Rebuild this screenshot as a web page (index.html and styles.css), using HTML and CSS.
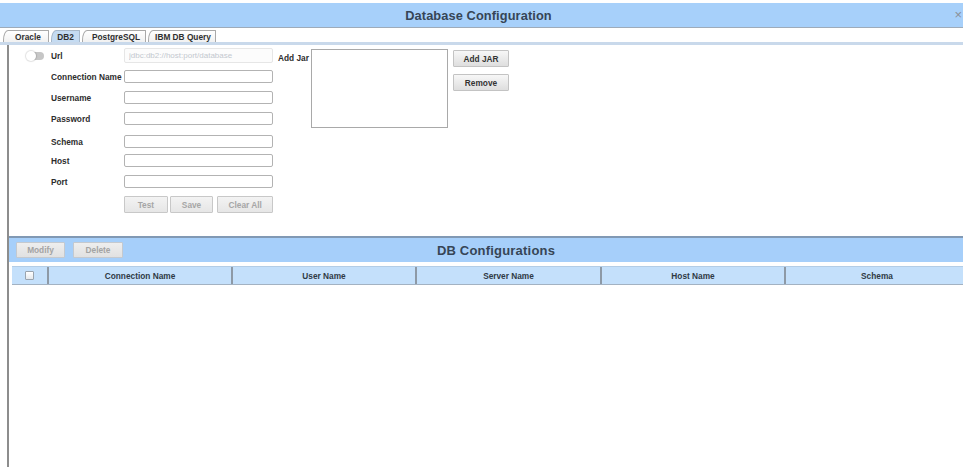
FILE: index.html
```html
<!DOCTYPE html>
<html lang="en">
<head>
<meta charset="utf-8">
<title>Database Configuration</title>
<link rel="stylesheet" href="styles.css">
</head>
<body>
<header class="titlebar">
  <h1 class="title">Database Configuration</h1>
  <span class="close">&times;</span>
</header>

<nav class="tabs">
  <span class="tab tab-oracle">Oracle</span>
  <span class="tab tab-db2 active">DB2</span>
  <span class="tab tab-pg">PostgreSQL</span>
  <span class="tab tab-ibm">IBM DB Query</span>
</nav>
<div class="tab-rule"></div>

<main class="main">
  <section class="form-panel">
    <div class="fields">
      <span class="toggle"><span class="knob"></span></span>
      <label class="label">Url</label>
      <input class="input input-url" type="text" placeholder="jdbc:db2://host:port/database" disabled>

      <span></span>
      <label class="label">Connection Name</label>
      <input class="input" type="text">

      <span></span>
      <label class="label">Username</label>
      <input class="input" type="text">

      <span></span>
      <label class="label">Password</label>
      <input class="input" type="password">

      <span class="row-gap"></span>
      <label class="label row-gap">Schema</label>
      <input class="input row-gap" type="text">

      <span></span>
      <label class="label">Host</label>
      <input class="input" type="text">

      <span></span>
      <label class="label">Port</label>
      <input class="input" type="text">

      <div class="actions">
        <button class="btn btn-disabled btn-test" disabled>Test</button>
        <button class="btn btn-disabled btn-save" disabled>Save</button>
        <button class="btn btn-disabled btn-clear" disabled>Clear All</button>
      </div>
    </div>

    <div class="jar">
      <label class="label jar-label">Add Jar</label>
      <div class="jar-list"></div>
      <div class="jar-buttons">
        <button class="btn btn-jar">Add JAR</button>
        <button class="btn btn-jar">Remove</button>
      </div>
    </div>
  </section>

  <section class="list-panel">
    <div class="band">
      <div class="band-buttons">
        <button class="btn btn-disabled btn-modify" disabled>Modify</button>
        <button class="btn btn-disabled btn-delete" disabled>Delete</button>
      </div>
      <h2 class="band-title">DB Configurations</h2>
    </div>

    <div class="grid-head">
      <div class="cell cell-check"><span class="checkbox"></span></div>
      <div class="cell">Connection Name</div>
      <div class="cell">User Name</div>
      <div class="cell">Server Name</div>
      <div class="cell">Host Name</div>
      <div class="cell">Schema</div>
    </div>
  </section>
</main>
</body>
</html>
```

FILE: styles.css
```css
* { box-sizing: border-box; }

html, body {
  margin: 0;
  height: 100%;
  overflow: hidden;
  background: #ffffff;
  font-family: "Liberation Sans", Arial, sans-serif;
  color: #2e2e2e;
}

/* ---- window title ---- */
.titlebar {
  position: relative;
  margin-top: 3px;
  height: 25px;
  background: #a7d0fa;
  border-bottom: 1px solid #9eabb9;
  display: flex;
  align-items: center;
  justify-content: center;
  padding-right: 6px;
}

.title {
  margin: 0;
  font-size: 12.8px;
  font-weight: bold;
  color: #364556;
  letter-spacing: 0.1px;
}

.close {
  position: absolute;
  right: 1px;
  top: 5px;
  font-size: 13px;
  line-height: 14px;
  color: #8a8f96;
}

/* ---- tabs ---- */
.tabs {
  display: flex;
  gap: 2px;
  margin-top: 2px;
  height: 12px;
  padding-left: 3px;
}

.tab {
  display: flex;
  align-items: center;
  justify-content: center;
  height: 12px;
  font-size: 8.3px;
  font-weight: bold;
  color: #2f2f2f;
  background: linear-gradient(#ffffff, #f1f1f1);
  border: 1px solid #a9a9a9;
  border-bottom: none;
  border-top-left-radius: 5px 10px;
  border-top-right-radius: 1px;
}

.tab-oracle { width: 46px; padding-left: 4px; }
.tab-db2 { width: 29px; }
.tab-pg { width: 64px; padding-left: 4px; }
.tab-ibm { width: 68px; padding-left: 2px; }

.tab.active {
  background: #c4dbf2;
  border-color: #a6b7c9;
}

.tab-rule {
  height: 3px;
  background: #c9d9eb;
}

/* ---- content ---- */
.main {
  margin-left: 7px;
  border-left: 2px solid #8d8d8d;
  height: calc(100% - 45px);
}

.form-panel {
  display: flex;
  height: 191px;
  padding: 4px 0 0 17px;
}

.fields {
  display: grid;
  grid-template-columns: 25px 73px 149px;
  grid-auto-rows: 13px;
  row-gap: 8px;
  align-items: center;
  align-content: start;
}

.fields .row-gap { margin-top: 4px; }

.label {
  font-size: 8.3px;
  font-weight: bold;
  color: #2d2d2d;
  white-space: nowrap;
}

.toggle {
  position: relative;
  width: 17px;
  height: 8px;
  border-radius: 4px;
  background: #c6c6c6;
  margin-left: 1px;
}

.knob {
  position: absolute;
  left: -1px;
  top: -1px;
  width: 10px;
  height: 10px;
  border-radius: 50%;
  background: #ffffff;
  box-shadow: 0 0 1px 1px rgba(0, 0, 0, 0.12);
}

.input {
  width: 149px;
  height: 13px;
  margin: 0;
  padding: 0 4px;
  border: 1px solid #b3b3b3;
  border-radius: 2px;
  background: #ffffff;
  font-family: inherit;
  font-size: 8px;
}

.input-url {
  height: 15px;
  margin: -1px 0;
  border-color: #e6e6e6;
  background: #fcfcfc;
}

.input-url::placeholder { color: #c3c8cf; }

.actions {
  grid-column: 3;
  display: flex;
  gap: 2px;
  height: 17px;
  margin-top: 4px;
}

.btn {
  margin: 0;
  padding: 0;
  height: 17px;
  font-family: inherit;
  font-size: 8.3px;
  font-weight: bold;
  border-radius: 1px;
}

.btn-disabled {
  color: #a6a6a6;
  border: 1px solid #c8c8c8;
  background: linear-gradient(#f3f3f3, #e6e6e6);
}

.btn-test { width: 44px; }
.btn-save { width: 44px; }
.btn-clear { width: 56px; margin-left: 2px; }

/* ---- jar list ---- */
.jar {
  display: flex;
  align-items: flex-start;
  margin-left: 5px;
}

.jar-label {
  margin-top: 4px;
  width: 32px;
}

.jar-list {
  width: 137px;
  height: 79px;
  margin-left: 1px;
  border: 1px solid #a9a9a9;
  background: #ffffff;
}

.jar-buttons {
  display: flex;
  flex-direction: column;
  gap: 7px;
  margin: 1px 0 0 5px;
}

.btn-jar {
  width: 56px;
  color: #333333;
  border: 1px solid #c3c3c3;
  background: linear-gradient(#f7f7f7, #dedede);
}

/* ---- configurations list ---- */
.list-panel {
  border-top: 2px solid #8199b4;
}

.band {
  display: flex;
  align-items: center;
  height: 24px;
  background: #a6cffa;
  padding-left: 7px;
}

.band-buttons {
  display: flex;
  gap: 8px;
  height: 16px;
}

.band-buttons .btn {
  height: 16px;
  font-weight: bold;
  color: #a3a3a3;
  border: 1px solid #c4c9cf;
  background: linear-gradient(#eeeeee, #e1e1e1);
}

.btn-modify { width: 49px; }
.btn-delete { width: 50px; }

.band-title {
  flex: 1;
  margin: 0;
  text-align: center;
  padding-right: 94px;
  font-size: 13px;
  font-weight: bold;
  color: #364556;
  letter-spacing: 0.2px;
}

.grid-head {
  display: grid;
  grid-template-columns: 35px 184px 184px 185px 184px 184px;
  width: 956px;
  height: 19px;
  margin: 4px 0 0 3px;
  background: #c4e0fb;
  border-top: 1px solid #b3cde6;
  border-bottom: 1px solid #a3b2c2;
}

.cell {
  display: flex;
  align-items: center;
  justify-content: center;
  font-size: 8.3px;
  font-weight: bold;
  color: #2f3a45;
  border-left: 2px solid #8d99a6;
}

.cell-check { border-left: none; }

.checkbox {
  width: 9px;
  height: 9px;
  border: 1px solid #9aa4ae;
  border-radius: 1px;
  background: linear-gradient(#ffffff, #e4e8ec);
}
```
